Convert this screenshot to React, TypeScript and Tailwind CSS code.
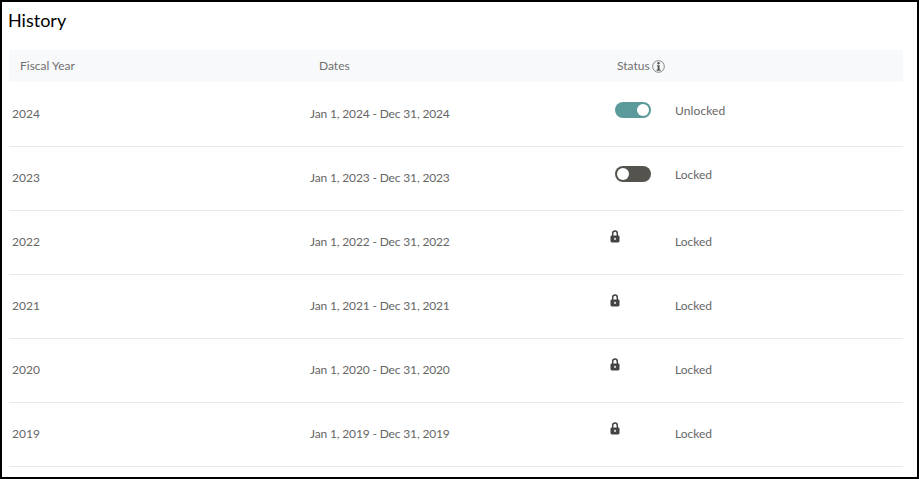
import React from 'react';

const rows = [
  { year: '2024', status: 'unlocked' },
  { year: '2023', status: 'locked' },
  { year: '2022', status: 'fixed' },
  { year: '2021', status: 'fixed' },
  { year: '2020', status: 'fixed' },
  { year: '2019', status: 'fixed' },
];

const LockIcon = () => (
  <svg width="10" height="13" viewBox="0 0 10 13" className="block">
    <path d="M2.7 6V3.4a2.3 2.3 0 0 1 4.6 0V6" fill="none" stroke="#444" strokeWidth="1.5" />
    <rect x="0.5" y="5.4" width="9" height="7.1" rx="1.4" fill="#444" />
    <circle cx="5" cy="8.9" r="1.1" fill="#ddd" />
  </svg>
);

const InfoIcon = () => (
  <svg width="13" height="13" viewBox="0 0 13 13" className="block">
    <circle cx="6.5" cy="6.5" r="5.8" fill="none" stroke="#777" strokeWidth="0.9" />
    <circle cx="6.5" cy="3.3" r="1.2" fill="#555" />
    <path d="M4.9 5.2h2.7v4.4h1v1.1H4.6V9.6h1V6.3H4.9z" fill="#555" />
  </svg>
);

const Toggle = ({ on }: { on: boolean }) => (
  <div
    className={`w-[36px] h-[16px] rounded-full flex items-center px-[2px] ${
      on ? 'bg-[#5b9a9b] justify-end' : 'bg-[#55534e] justify-start'
    }`}
  >
    <div className="w-[12px] h-[12px] rounded-full bg-white" />
  </div>
);

const Row = ({ year, status }: { year: string; status: string }) => (
  <div className="flex h-[64px] border-b border-[#e9e9e9] text-[12px] text-[#666] leading-[16px]">
    <div className="w-[301px] pl-[3px] pt-[23px]">{year}</div>
    <div className="w-[298px] pt-[23px] tracking-[-0.15px]">
      Jan 1, {year} - Dec 31, {year}
    </div>
    {status === 'fixed' ? (
      <div className="flex">
        <div className="w-[67px] pl-[2px] pt-[19px]">
          <LockIcon />
        </div>
        <div className="pt-[23px]">Locked</div>
      </div>
    ) : (
      <div className="flex">
        <div className="w-[67px] pl-[7px] pt-[19px]">
          <Toggle on={status === 'unlocked'} />
        </div>
        <div className={status === 'unlocked' ? 'pt-[20px] tracking-[0.1px]' : 'pt-[20px]'}>
          {status === 'unlocked' ? 'Unlocked' : 'Locked'}
        </div>
      </div>
    )}
  </div>
);

export default function App() {
  return (
    <div className="h-[479px] w-[919px] border-2 border-black bg-white overflow-hidden font-['Lato',sans-serif]">
      <div className="pl-[7px] pr-[14px]">
        <h1 className="h-[48px] pt-[7px] -ml-px text-[18px] leading-[22px] text-black font-normal">History</h1>
        <div className="flex h-[32px] mb-px items-center bg-[#f8f9fa] text-[12px] text-[#707070]">
          <div className="w-[310px] pl-[11px]">Fiscal Year</div>
          <div className="w-[298px]">Dates</div>
          <div className="flex items-center gap-[2px]">
            Status <InfoIcon />
          </div>
        </div>
        {rows.map((r) => (
          <Row key={r.year} year={r.year} status={r.status} />
        ))}
      </div>
    </div>
  );
}
